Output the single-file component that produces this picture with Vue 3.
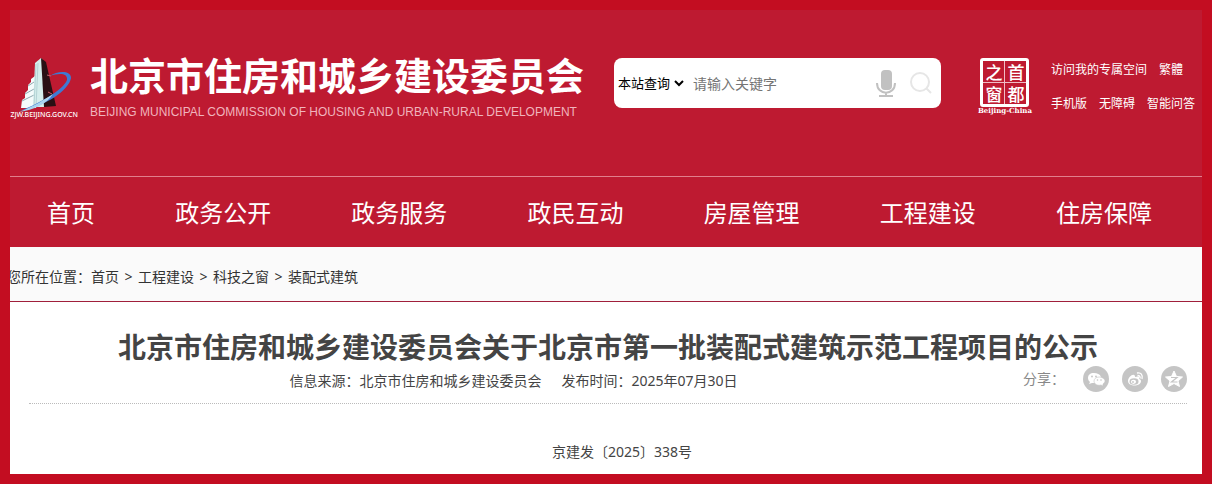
<script setup>
import { ref } from 'vue'

const scope = ref('site')
const keyword = ref('')
const nav = ['首页', '政务公开', '政务服务', '政民互动', '房屋管理', '工程建设', '住房保障']
const crumbs = ['首页', '工程建设', '科技之窗', '装配式建筑']
const sealChars = ['之', '首', '窗', '都']
const quickLinks = [
  ['访问我的专属空间', '繁體'],
  ['手机版', '无障碍', '智能问答'],
]
</script>

<template>
  <div class="page">
    <header class="header">
      <div class="masthead">
        <a class="emblem" href="#" aria-label="ZJW.BEIJING.GOV.CN">
          <svg viewBox="0 0 70 66" width="70" height="66">
            <polygon points="11,50 12,42 15,40 15,35 18,32 18,27 21,24 21,21 25,18 26,50" fill="#f4fbfb" />
            <path d="M12 43l12-6M15 36l9-5M18 28l6-4" stroke="#8fa9b0" stroke-width="1" />
            <polygon points="25,5 31,0 33,2 35,49 23,49" fill="#d5eeec" />
            <path d="M28 5l-2 44M26 6l-2 42" stroke="#b4d3d5" stroke-width="1" />
            <polygon points="31,0 36,4 46,48 34,49" fill="#2a1014" />
            <path d="M37 17l4 1M38 34l4 2" stroke="#c9606b" stroke-width="1" />
            <path d="M40 18C47 13 61 12 61 20C59 32 36 48 10 53C32 44 53 32 57 22C58 15 49 15 40 18Z" fill="#3f7ad2" />
            <path d="M9 54C25 48 35 41 43 36C37 46 24 52 9 54Z" fill="#a9d4ef" />
            <text x="68" y="59" text-anchor="end" class="emblem-text">ZJW.BEIJING.GOV.CN</text>
          </svg>
        </a>

        <div class="brand">
          <div class="brand-name">北京市住房和城乡建设委员会</div>
          <div class="brand-en">BEIJING MUNICIPAL COMMISSION OF HOUSING AND URBAN-RURAL DEVELOPMENT</div>
        </div>

        <form class="search" @submit.prevent>
          <select v-model="scope" class="scope" aria-label="查询范围">
            <option value="site">本站查询</option>
          </select>
          <input v-model="keyword" class="keyword" type="text" placeholder="请输入关键字" aria-label="请输入关键字" />
          <button class="icon-button" type="button" aria-label="语音输入">
            <svg viewBox="0 0 20 28" width="20" height="28">
              <rect x="5" y="1" width="11" height="20" rx="4" fill="#c1c1c1" />
              <path d="M1 14c0 13 18 13 18 0M10 23v4M3 27h14" fill="none" stroke="#c1c1c1" stroke-width="2" />
            </svg>
          </button>
          <button class="icon-button" type="submit" aria-label="搜索">
            <svg viewBox="0 0 24 24" width="24" height="24">
              <circle cx="11" cy="11" r="9" fill="none" stroke="#e6e6e6" stroke-width="2" />
              <path d="M17 17l5 5" stroke="#e6e6e6" stroke-width="2" />
            </svg>
          </button>
        </form>

        <a class="seal" href="#" aria-label="首都之窗">
          <span class="seal-grid">
            <span v-for="ch in sealChars" :key="ch">{{ ch }}</span>
          </span>
          <span class="seal-caption">Beijing-China</span>
        </a>

        <div class="quick">
          <div v-for="(row, i) in quickLinks" :key="i" class="quick-row">
            <a v-for="link in row" :key="link" href="#">{{ link }}</a>
          </div>
        </div>
      </div>

      <nav class="nav">
        <a v-for="item in nav" :key="item" href="#">{{ item }}</a>
      </nav>
    </header>

    <div class="crumb-bar">
      <div class="crumbs">
        <span>您所在位置：</span>
        <template v-for="(c, i) in crumbs" :key="c">
          <span v-if="i" class="sep">&gt;</span>
          <a href="#">{{ c }}</a>
        </template>
      </div>
    </div>

    <main class="article">
      <h1>北京市住房和城乡建设委员会关于北京市第一批装配式建筑示范工程项目的公示</h1>
      <div class="info">
        <div class="meta">
          <span>信息来源：北京市住房和城乡建设委员会</span>
          <span>发布时间：2025年07月30日</span>
        </div>
        <div class="share">
          <span class="share-label">分享：</span>
          <a href="#" aria-label="微信">
            <svg viewBox="0 0 26 26" width="26" height="26">
              <circle cx="13" cy="13" r="13" fill="#c5c5c5" />
              <path d="M11 7c-4 0-6 2-6 5 0 2 1 3 2 4l-1 2 3-1h3c-1-4 2-6 6-6-1-3-4-4-7-4Z" fill="#fff" />
              <path d="M16 11c-3 0-5 2-5 4 0 3 3 5 7 4l2 1v-2c1-1 2-2 2-3 0-2-3-4-6-4Z" fill="#fff" stroke="#c5c5c5" stroke-width=".6" />
              <g fill="#c5c5c5"><circle cx="9" cy="10.500" r=".9" /><circle cx="13" cy="10.500" r=".9" /><circle cx="14.500" cy="14" r=".8" /><circle cx="18" cy="14" r=".8" /></g>
            </svg>
          </a>
          <a href="#" aria-label="微博">
            <svg viewBox="0 0 26 26" width="26" height="26">
              <circle cx="13" cy="13" r="13" fill="#c5c5c5" />
              <path d="M12 9c-2-1-6 3-6 6 0 6 13 6 13 0 0-1-1-2-2-2 1-3-1-3-4-2 0-1 0-2-1-2Z" fill="#fff" />
              <ellipse cx="12" cy="15.500" rx="4.500" ry="3.200" fill="#c5c5c5" />
              <ellipse cx="11.500" cy="15.800" rx="2.600" ry="2.100" fill="#fff" />
              <circle cx="11" cy="16" r=".9" fill="#c5c5c5" />
              <path d="M15 7c4-1 6 2 5 6M15.500 9.500c2 0 3 1 2.500 3" fill="none" stroke="#fff" stroke-width="1.300" />
            </svg>
          </a>
          <a href="#" aria-label="QQ空间">
            <svg viewBox="0 0 26 26" width="26" height="26">
              <circle cx="13" cy="13" r="13" fill="#c5c5c5" />
              <path d="M13 5l2.500 5.500 6 .500-4.500 4 1.500 5.500L13 17.500 7.500 20.500 9 15l-4.500-4 6-.500Z" fill="#fff" stroke="#fff" stroke-linejoin="round" />
              <path d="M10 11.500h6l-5.500 4.500h6" fill="none" stroke="#c5c5c5" stroke-width="1.200" />
            </svg>
          </a>
        </div>
      </div>
      <p class="doc-no">京建发〔2025〕338号</p>
    </main>
  </div>
</template>

<style>
body {
  background: #c30d21;
}
</style>

<style scoped>
.page {
  box-sizing: border-box;
  border: 10px solid #c30d21;
  background: #fff;
  overflow: hidden;
  font: 14px/20px "Noto Sans", "Noto Sans CJK SC", sans-serif;
  color: #444;
}
a {
  color: inherit;
  text-decoration: none;
}
svg {
  display: block;
}
.header {
  background: #be1a31;
  color: #fff;
}
.masthead {
  display: flex;
  align-items: flex-start;
  padding: 48px 7px 52px 0;
}
.emblem {
  flex: none;
  margin-right: 10px;
}
.emblem svg {
  overflow: visible;
}
.emblem-text {
  font: 500 7px "Noto Sans", sans-serif;
  fill: #fff;
}
.brand {
  flex: none;
  white-space: nowrap;
}
.brand-name {
  font-size: 38px;
  font-weight: 700;
  line-height: 34px;
}
.brand-en {
  margin-top: 12px;
  font: 12px/16px "Liberation Sans", Arial, sans-serif;
  color: #f0b4bd;
}
.search {
  flex: 1;
  display: flex;
  align-items: center;
  gap: 13px;
  min-width: 0;
  height: 50px;
  margin-left: 30px;
  padding-right: 8px;
  box-sizing: border-box;
  border-radius: 8px;
  background: #fff;
}
.scope {
  flex: none;
  height: 30px;
  margin-right: -7px;
  border: 0;
  background: #fff;
  color: #000;
  font: 13px "Noto Sans", "Noto Sans CJK SC", sans-serif;
}
.keyword {
  flex: 1;
  min-width: 0;
  height: 30px;
  padding: 0;
  border: 0;
  outline: 0;
  background: none;
  font: 14px "Noto Sans", "Noto Sans CJK SC", sans-serif;
}
.keyword::placeholder {
  color: #757575;
}
.icon-button {
  flex: none;
  padding: 0;
  border: 0;
  background: none;
}
.seal {
  flex: none;
  display: flex;
  flex-direction: column;
  align-items: center;
  width: 54px;
  margin: 0 19px 0 37px;
}
.seal-grid {
  display: grid;
  grid-template-columns: 21px 21px;
  grid-auto-rows: 21px;
  gap: 1px;
  border: 3px solid #fff;
  border-radius: 3px;
  background: linear-gradient(#f0bcc4, #f0bcc4) center / 1px 100% no-repeat,
    linear-gradient(#f0bcc4, #f0bcc4) center / 100% 1px no-repeat;
  font: 500 17px/21px "Noto Sans CJK SC", sans-serif;
  text-align: center;
}
.seal-caption {
  font: 700 7px/8px "DejaVu Serif", serif;
  white-space: nowrap;
}
.quick {
  flex: none;
  display: flex;
  flex-direction: column;
  gap: 10px;
  font-size: 12px;
  line-height: 24px;
}
.quick-row {
  display: flex;
  gap: 12px;
}
.nav {
  display: flex;
  justify-content: space-between;
  padding: 1px 50px 0 37px;
  border-top: 1px solid #e17f8c;
  font-size: 24px;
  line-height: 69px;
}
.crumb-bar {
  background: #fafafa;
  border-bottom: 1px solid #a01f3b;
  color: #333;
}
.crumbs {
  display: flex;
  margin-left: -3px;
  padding-top: 6px;
  line-height: 48px;
}
.sep {
  width: 19px;
  text-align: center;
}
.article {
  padding: 26px 15px 12px 19px;
}
h1 {
  margin: 0;
  font-size: 28px;
  font-weight: 700;
  line-height: 38px;
  text-align: center;
}
.info {
  display: flex;
  align-items: flex-start;
  padding-bottom: 11px;
  border-bottom: 1px dotted #bbb;
}
.meta {
  flex: 1;
  display: flex;
  justify-content: center;
  gap: 20px;
  padding-top: 5px;
}
.share {
  flex: none;
  display: flex;
  align-items: center;
  justify-content: flex-end;
  gap: 13px;
  width: 189px;
}
.share-label {
  margin-right: 5px;
  color: #888;
}
.doc-no {
  margin: 38px 0 0;
  text-align: center;
  text-indent: 2em;
}
</style>
